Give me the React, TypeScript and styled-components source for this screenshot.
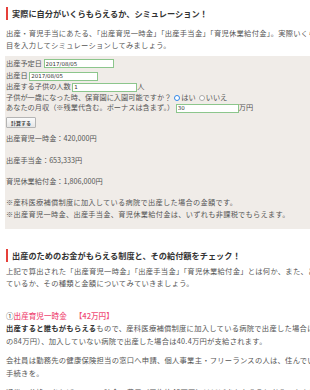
import styled, { createGlobalStyle } from 'styled-components';

const GlobalStyle = createGlobalStyle`
  html, body {
    margin: 0;
    padding: 0;
    overflow: hidden;
    background: #fff;
  }
  body {
    font-family: "Noto Sans CJK JP", "Noto Sans", sans-serif;
    color: #555;
  }
`;

const App = () => {
  return (
    <>
      <GlobalStyle />
      <Page>
        <SectionTitle>実際に自分がいくらもらえるか、シミュレーション！</SectionTitle>
        <Lead>
          出産・育児手当にあたる、「出産育児一時金」「出産手当金」「育児休業給付金」。実際いくらもらえるか、必要な項
          <br />
          目を入力してシミュレーションしてみましょう。
        </Lead>

        <SimBox>
          <FormRow $h={13}>
            出産予定日 <TextField $w={70} defaultValue="2017/08/05" />
          </FormRow>
          <FormRow $h={12}>
            出産日 <TextField $w={69} defaultValue="2017/08/05" />
          </FormRow>
          <FormRow $h={10}>
            出産する子供の人数 <TextField $w={65} defaultValue="1" />人
          </FormRow>
          <FormRow $h={11}>
            子供が一歳になった時、保育園に入園可能ですか？
            <RadioDot $checked />
            はい
            <RadioDot />
            いいえ
          </FormRow>
          <FormRow $h={10}>
            あなたの月収（※残業代含む。ボーナスは含まず。） <TextField $w={63} defaultValue="30" />万円
          </FormRow>
          <CalcButton type="button">計算する</CalcButton>

          <ResultLine $gap={4}>出産育児一時金：420,000円</ResultLine>
          <ResultLine $gap={10}>出産手当金：653,333円</ResultLine>
          <ResultLine $gap={9}>育児休業給付金：1,806,000円</ResultLine>
          <NoteLine $gap={9}>※産科医療補償制度に加入している病院で出産した場合の金額です。</NoteLine>
          <NoteLine $gap={0}>※出産育児一時金、出産手当金、育児休業給付金は、いずれも非課税でもらえます。</NoteLine>
        </SimBox>

        <SectionTitle $top={20}>出産のためのお金がもらえる制度と、その給付額をチェック！</SectionTitle>
        <Lead $top={3}>
          上記で算出された「出産育児一時金」「出産手当金」「育児休業給付金」とは何か、また、どのような条件で支給され
          <br />
          ているか、その種類と金額についてみていきましょう。
        </Lead>

        <ItemTitle>
          ①<Accent>出産育児一時金</Accent>
          <Accent>【42万円】</Accent>
        </ItemTitle>
        <Body>
          <strong>出産すると誰もがもらえる</strong>もので、産科医療補償制度に加入している病院で出産した場合は一律42万円（双子の場合は倍
          <br />
          の84万円）、加入していない病院で出産した場合は40.4万円が支給されます。
        </Body>
        <Body>
          会社員は勤務先の健康保険担当の窓口へ申請、個人事業主・フリーランスの人は、住んでいる市区町村の役所で
          <br />
          手続きを。
        </Body>
        <Body>通常の分娩であれば、この一時金で費用（平均約48万円）はほぼまかなえると考えてよさそうです。</Body>
      </Page>
    </>
  );
};

export default App;

const Page = styled.div`
  width: 440px;
  padding: 7px 0 0 6px;
`;

const SectionTitle = styled.h2<{ $top?: number }>`
  margin: ${({ $top }) => $top ?? 0}px 0 0;
  padding-left: 4px;
  border-left: 2px solid #e6403a;
  font-size: 8.2px;
  line-height: 13px;
  font-weight: 700;
  color: #333;
  white-space: nowrap;
`;

const Lead = styled.p<{ $top?: number }>`
  margin: ${({ $top }) => $top ?? 7}px 0 0;
  font-size: 7.3px;
  line-height: 12px;
  letter-spacing: 0.25px;
  white-space: nowrap;
`;

const SimBox = styled.section`
  margin: 5px 0 0 -1px;
  padding: 1px 0 9px 1px;
  background: #f0ece8;
  font-size: 7.2px;
  color: #555;
`;

const FormRow = styled.div<{ $h: number }>`
  display: flex;
  align-items: center;
  height: ${({ $h }) => $h}px;
  white-space: pre;
  line-height: 1;
`;

const TextField = styled.input<{ $w: number }>`
  box-sizing: border-box;
  width: ${({ $w }) => $w}px;
  height: 9px;
  margin: 0;
  padding: 0 1px;
  border: 1px solid #8cc68c;
  background: #fff;
  font-family: "DejaVu Sans", sans-serif;
  font-size: 5.5px;
  color: #333;
  outline: none;
`;

const RadioDot = styled.span<{ $checked?: boolean }>`
  box-sizing: border-box;
  width: 6px;
  height: 6px;
  margin: 0 1px 0 3px;
  border-radius: 50%;
  border: ${({ $checked }) => ($checked ? '1.8px solid #2f86e8' : '0.6px solid #aaa')};
  background: #fff;
`;

const CalcButton = styled.button`
  display: block;
  box-sizing: border-box;
  width: 30px;
  height: 11px;
  margin: 4px 0 0;
  padding: 0;
  border: 1px solid #b4b4b4;
  border-radius: 1px;
  background: linear-gradient(#fbfbfb, #e6e6e6);
  font-family: "Noto Sans CJK JP", sans-serif;
  font-size: 5px;
  font-weight: 700;
  color: #444;
`;

const ResultLine = styled.p<{ $gap: number }>`
  margin: ${({ $gap }) => $gap}px 0 0;
  font-size: 7.2px;
  line-height: 12px;
  white-space: nowrap;
`;

const NoteLine = styled.p<{ $gap: number }>`
  margin: ${({ $gap }) => $gap}px 0 0;
  font-size: 7.2px;
  line-height: 12px;
  letter-spacing: 0.3px;
  white-space: nowrap;
`;

const ItemTitle = styled.div`
  margin-top: 20px;
  font-size: 7.6px;
  line-height: 13px;
  color: #444;
  white-space: nowrap;
`;

const Accent = styled.span`
  color: #f04d78;
  font-weight: 500;
  margin-right: 8px;
`;

const Body = styled.p`
  margin: 0 0 7px;
  font-size: 7.3px;
  line-height: 12.5px;
  letter-spacing: 0.25px;
  white-space: nowrap;

  strong {
    font-weight: 700;
    color: #333;
  }
`;
